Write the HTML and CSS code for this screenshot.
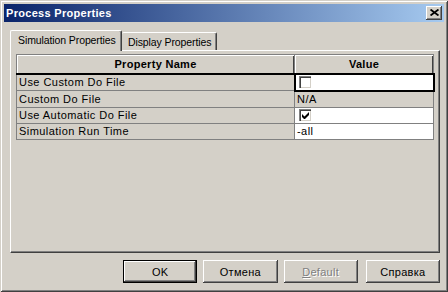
FILE: index.html
```html
<!DOCTYPE html>
<html>
<head>
<meta charset="utf-8">
<link rel="stylesheet" href="styles.css">
</head>
<body>
<div class="window">
  <div class="titlebar">
    <span class="title">Process Properties</span>
    <span class="close">
      <svg width="9" height="7" viewBox="0 0 9 7"><path d="M0.5 0.5l8 6M8.5 0.5l-8 6" stroke="#000" stroke-width="1.8" fill="none"/></svg>
    </span>
  </div>
  <div class="content">
    <div class="tabs">
      <div class="tab sel">Simulation Properties</div>
      <div class="tab">Display Properties</div>
    </div>
    <div class="panel">
      <table class="grid">
        <colgroup><col class="c1"><col class="c2"></colgroup>
        <thead>
          <tr><th>Property Name</th><th>Value</th></tr>
        </thead>
        <tbody>
          <tr><td>Use Custom Do File</td><td class="val edit"><span class="cb"></span></td></tr>
          <tr><td>Custom Do File</td><td class="val">N/A</td></tr>
          <tr><td>Use Automatic Do File</td><td class="val white box"><span class="cb checked"><svg width="7" height="7" viewBox="0 0 7 7"><path d="M0 2v3l2 2h1l4-4V0L2.5 4.5z" fill="#000"/></svg></span></td></tr>
          <tr><td>Simulation Run Time</td><td class="val white">-all</td></tr>
        </tbody>
      </table>
    </div>
    <div class="buttons">
      <button class="btn default">OK</button>
      <button class="btn">Отмена</button>
      <button class="btn disabled"><u>D</u>efault</button>
      <button class="btn last">Справка</button>
    </div>
  </div>
</div>
</body>
</html>
```
FILE: styles.css
```css
html, body {
  margin: 0;
  padding: 0;
}
body {
  width: 448px;
  height: 292px;
  overflow: hidden;
  background: #d4d0c8;
  font-family: "Liberation Sans", Arial, sans-serif;
  font-size: 11px;
  color: #000;
}
.window {
  box-sizing: border-box;
  width: 448px;
  height: 292px;
  padding: 4px;
  background: #d4d0c8;
  box-shadow: inset 1px 1px #d4d0c8, inset -1px -1px #404040, inset 2px 2px #fff, inset -2px -2px #808080;
}
.titlebar {
  height: 18px;
  display: flex;
  align-items: center;
  justify-content: space-between;
  padding: 0 2px 0 2px;
  background: linear-gradient(to right, #0a246a, #a6caf0);
}
.title {
  color: #fff;
  font-weight: bold;
  font-family: "Liberation Sans", Arial, sans-serif;
  font-size: 11px;
  letter-spacing: 0.3px;
}
.close {
  box-sizing: border-box;
  width: 16px;
  height: 14px;
  background: #d4d0c8;
  display: flex;
  align-items: center;
  justify-content: center;
  box-shadow: inset -1px -1px #404040, inset 1px 1px #fff, inset -2px -2px #808080;
}
.close svg {
  display: block;
  margin-top: -1px;
}
.content {
  padding: 8px 4px 0 6px;
}
.tabs {
  display: flex;
  align-items: flex-end;
  height: 20px;
}
.tab {
  box-sizing: border-box;
  height: 18px;
  padding: 3px 5px 0 5px;
  border-top: 1px solid #fff;
  border-left: 1px solid #fff;
  border-right: 1px solid #404040;
  box-shadow: inset -1px 0 #808080;
  border-radius: 2px 2px 0 0;
  white-space: nowrap;
  line-height: 13px;
  font-size: 10.5px;
  letter-spacing: -0.1px;
}
.tab.sel {
  height: 21px;
  width: 112px;
  padding: 3px 0 0 7px;
  margin-bottom: -1px;
  background: #d4d0c8;
  position: relative;
  z-index: 1;
}
.tab.sel + .tab {
  border-left: none;
  width: 95px;
  padding-left: 6px;
}
.panel {
  box-sizing: border-box;
  height: 203px;
  width: 430px;
  padding: 3px 0 0 5px;
  border-top: 1px solid #fff;
  border-left: 1px solid #fff;
  border-right: 1px solid #404040;
  border-bottom: 1px solid #404040;
  box-shadow: inset -1px -1px #808080;
}
.grid {
  border-collapse: collapse;
  table-layout: fixed;
  width: 417px;
}
.c1 { width: 278px; }
.c2 { width: 139px; }
.grid th {
  height: 19px;
  padding: 0;
  box-sizing: border-box;
  font-weight: bold;
  text-align: center;
  background: #d4d0c8;
  border: 1px solid #808080;
  border-bottom: 2px solid #000;
  box-shadow: inset 1px 1px #fff, inset -1px 0 #404040;
  line-height: 16px;
  font-size: 11px;
  letter-spacing: 0.3px;
}
.grid td {
  height: 15px;
  padding: 0 0 0 2px;
  border: 1px solid #808080;
  line-height: 14px;
  white-space: nowrap;
  vertical-align: middle;
  letter-spacing: 0.45px;
}
.grid td.white {
  background: #fff;
}
.grid td.box {
  padding-left: 4px;
}
.grid td.edit {
  background: #fff;
  border: 2px solid #000;
  padding-left: 3px;
}
.cb {
  box-sizing: border-box;
  display: flex;
  align-items: center;
  justify-content: center;
  width: 12px;
  height: 12px;
  background: #fff;
  border-top: 1px solid #808080;
  border-left: 1px solid #808080;
  box-shadow: inset 1px 1px #404040, inset -1px -1px #d4d0c8;
}
.buttons {
  display: flex;
  gap: 6px;
  margin-top: 7px;
  padding-left: 113px;
}
.btn {
  box-sizing: border-box;
  width: 75px;
  height: 23px;
  padding: 0;
  margin: 0;
  border: none;
  background: #d4d0c8;
  font-family: "Liberation Sans", Arial, sans-serif;
  font-size: 11px;
  letter-spacing: 0.3px;
  color: #000;
  box-shadow: inset -1px -1px #404040, inset 1px 1px #fff, inset -2px -2px #808080;
}
.btn.default {
  border: 1px solid #000;
  box-shadow: inset -1px -1px #404040, inset 1px 1px #fff, inset -2px -2px #808080;
}
.btn.disabled {
  color: #808080;
  text-shadow: 1px 1px #fff;
}
.btn.last {
  margin-left: 2px;
}
```
